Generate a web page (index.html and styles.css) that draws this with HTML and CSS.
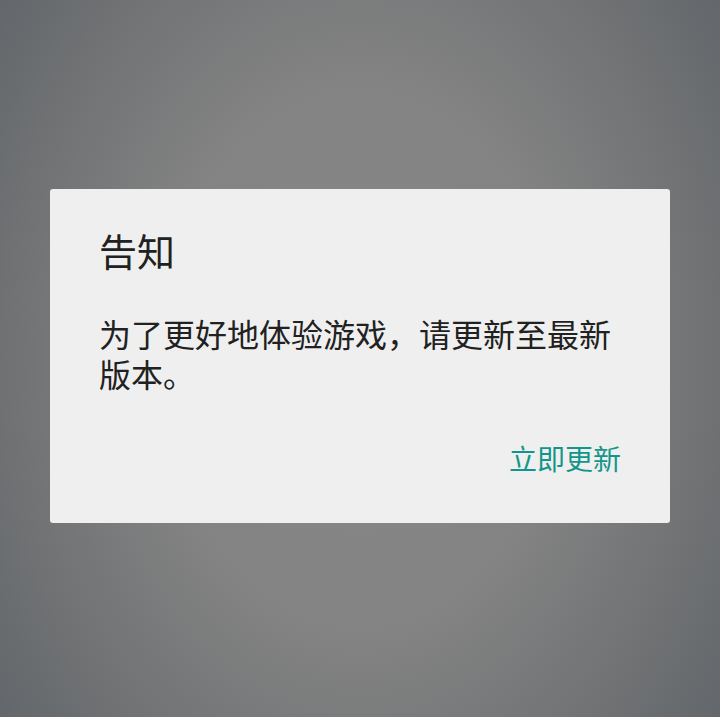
FILE: index.html
```html
<!DOCTYPE html>
<html lang="zh-CN">
<head>
<meta charset="utf-8">
<title>告知</title>
<link rel="stylesheet" href="styles.css">
</head>
<body>
<div class="dialog">
  <div class="title">告知</div>
  <div class="message">为了更好地体验游戏，请更新至最新版本。</div>
  <div class="actions"><span class="btn">立即更新</span></div>
</div>
</body>
</html>
```
FILE: styles.css
```css
html, body {
  margin: 0;
  padding: 0;
  width: 720px;
  height: 717px;
  overflow: hidden;
}
body {
  background: radial-gradient(ellipse 62% 85% at 50% 50%, #888888 0%, #838383 45%, #6f7173 80%, #63676b 100%);
  font-family: "Noto Sans CJK SC", "Noto Sans", sans-serif;
  padding-top: 189px;
  box-sizing: border-box;
}
.dialog {
  width: 620px;
  height: 334px;
  margin: 0 0 0 50px;
  background: #efefef;
  border-radius: 3px;
  box-sizing: border-box;
  padding: 39px 49px 0 49px;
  display: flex;
  flex-direction: column;
}
.title {
  font-size: 38px;
  line-height: 44px;
  color: #212121;
}
.message {
  margin-top: 41px;
  font-size: 32px;
  line-height: 40px;
  color: #212121;
}
.actions {
  margin-top: 47px;
  display: flex;
  justify-content: flex-end;
}
.btn {
  font-size: 28px;
  line-height: 36px;
  color: #13968a;
}
```
